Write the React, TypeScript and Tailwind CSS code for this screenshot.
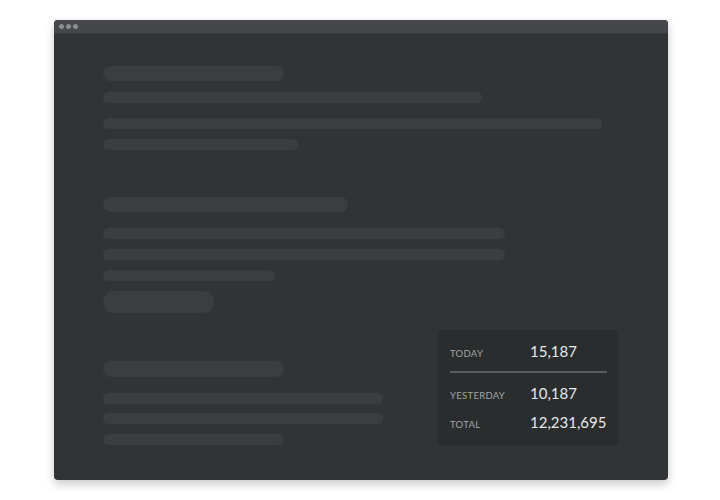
function Bar({ className }: { className: string }) {
    return <div className={`rounded-full bg-[#3b3e3f] ${className}`} />;
}

function StatRow({ label, value, className }: { label: string; value: string; className?: string }) {
    return (
        <div className={`flex items-baseline ${className ?? ""}`}>
            <span className="w-[80px] text-[9.5px] uppercase tracking-[0.3px] text-[#a3a5a6]">{label}</span>
            <span className="text-[15px] leading-[20px] text-[#e8e8e8]">{value}</span>
        </div>
    );
}

export default function App() {
    return (
        <div className="min-h-[500px] w-[720px] bg-white pt-[20px] pl-[54px]" style={{ fontFamily: "Lato, 'Open Sans', sans-serif" }}>
            <div className="w-[614px] h-[460px] rounded-[4px] overflow-hidden bg-[#313435] shadow-[0_4px_10px_rgba(0,0,0,0.22)]">
                {/* title bar */}
                <div className="h-[13px] bg-[#45474a] border-b border-[#37393b] flex items-center gap-[2px] pl-[5px] box-content">
                    <span className="w-[5px] h-[5px] rounded-full bg-[#8d8e8f]" />
                    <span className="w-[5px] h-[5px] rounded-full bg-[#8d8e8f]" />
                    <span className="w-[5px] h-[5px] rounded-full bg-[#8d8e8f]" />
                </div>

                <div className="pl-[49px] pt-[32px] flex flex-col items-start">
                    <Bar className="h-[15px] w-[181px]" />
                    <Bar className="mt-[11px] h-[11px] w-[379px]" />
                    <Bar className="mt-[15px] h-[11px] w-[499px]" />
                    <Bar className="mt-[10px] h-[11px] w-[195px]" />

                    <Bar className="mt-[47px] h-[15px] w-[245px]" />
                    <Bar className="mt-[16px] h-[11px] w-[402px]" />
                    <Bar className="mt-[10px] h-[11px] w-[402px]" />
                    <Bar className="mt-[10px] h-[11px] w-[172px]" />
                    <Bar className="mt-[10px] h-[22px] w-[111px]" />

                    <div className="mt-[17px] flex items-end">
                        <div className="w-[280px] flex flex-col items-start">
                            <Bar className="h-[16px] w-[181px]" />
                            <Bar className="mt-[16px] h-[11px] w-[280px]" />
                            <Bar className="mt-[9px] h-[11px] w-[280px]" />
                            <Bar className="mt-[10px] h-[11px] w-[181px]" />
                        </div>

                        <div className="ml-[55px] w-[180px] bg-[#2a2d2e] pl-[12px] pr-[11px] pt-[11px] pb-[13px]">
                            <StatRow label="Today" value="15,187" />
                            <div className="mt-[10px] h-[2px] bg-[#585a5b]" />
                            <StatRow label="Yesterday" value="10,187" className="mt-[10px]" />
                            <StatRow label="Total" value="12,231,695" className="mt-[8px]" />
                        </div>
                    </div>
                </div>
            </div>
        </div>
    );
}
